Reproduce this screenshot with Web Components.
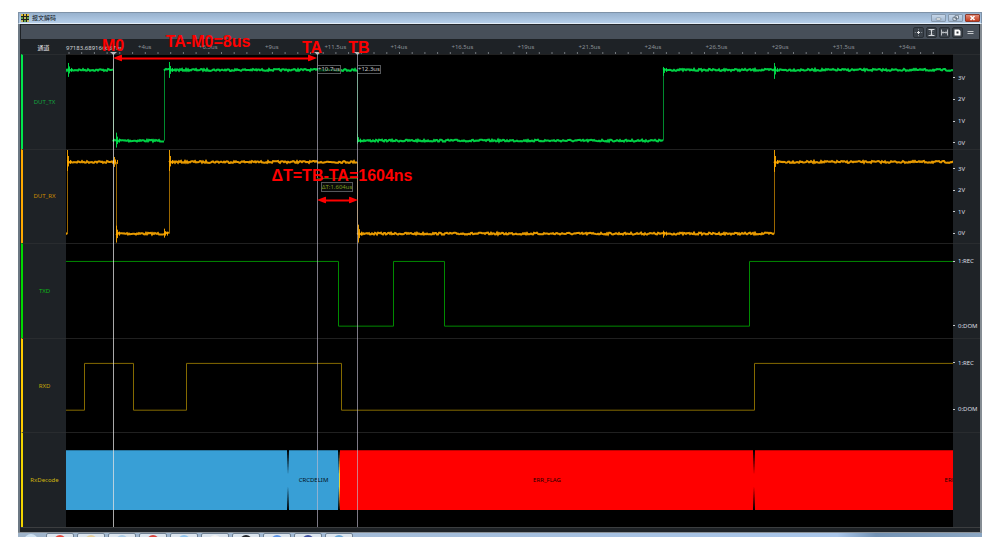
<!DOCTYPE html>
<html lang="zh-CN">
<head>
<meta charset="utf-8">
<title>报文解码</title>
<style>
  body {
    margin: 0;
    background: #fff;
    font: 6px/8px "Noto Sans", "Noto Sans CJK SC", sans-serif;
  }
</style>
</head>
<body>

<scope-window>
  <span slot="title">报文解码</span>
  <time-ruler slot="ruler" start="97183.689166667us" ticks="+4us +6.5us +9us +11.5us +14us +16.5us +19us +21.5us +24us +26.5us +29us +31.5us +34us">通道</time-ruler>

  <scope-channel name="DUT_TX" color="#00e64d" text="#12a33e">
    <analog-trace color="#00e64d" high="15" low="86" levels="0H 47L 98H 291L 597H" spikes="2:-7:7 50:-8:7 103:-8:8 291:-7:3 597:-3:6 708:-7:9"></analog-trace>
    <value-scale slot="scale" from="23" to="88" labels="3V 2V 1V 0V"></value-scale>
  </scope-channel>
  <scope-channel name="DUT_RX" color="#ffaa00" text="#c98c00">
    <analog-trace color="#ffaa00" high="12" low="84" levels="0L 1H 50L 103H 291L 708H" spikes="1:-12:9 48:-5:5 50:-8:9 98:-5:4 103:-12:9 292:-9:9 597:-3:4 708:-12:10"></analog-trace>
    <value-scale slot="scale" from="19" to="84" labels="3V 2V 1V 0V"></value-scale>
  </scope-channel>
  <scope-channel name="TXD" color="#00d900" text="#0cb516">
    <logic-trace color="#008a00" high="17" low="82" levels="0H 272L 327H 378L 683H"></logic-trace>
    <value-scale slot="scale" from="17" to="82" labels="1:REC 0:DOM"></value-scale>
  </scope-channel>
  <scope-channel name="RXD" color="#ffcc00" text="#c4a408">
    <logic-trace color="#846a00" high="24" low="71" levels="0L 18H 67L 120H 275L 688H"></logic-trace>
    <value-scale slot="scale" from="24" to="71" labels="1:REC 0:DOM"></value-scale>
  </scope-channel>
  <scope-channel name="RxDecode" color="#f2d500" text="#cdb40e">
    <decode-lane>
      <decode-frame span="222"></decode-frame>
      <decode-frame span="51">CRCDELIM</decode-frame>
      <decode-frame span="415" error first>ERR_FLAG</decode-frame>
      <decode-frame span="409" error>ERR_FLAG</decode-frame>
    </decode-lane>
  </scope-channel>

  <time-cursor slot="overlay" at="47" main></time-cursor>
  <time-cursor slot="overlay" at="251">+10.7us</time-cursor>
  <time-cursor slot="overlay" at="291">+12.3us</time-cursor>
  <delta-tag slot="overlay" from="251" to="291">ΔT:1.604us</delta-tag>

  <span-arrow slot="overlay" from="47" to="251" y="4"></span-arrow>
  <span-arrow slot="overlay" from="251" to="292" y="146"></span-arrow>
  <red-note slot="overlay" at="47" y="-8">M0</red-note>
  <red-note slot="overlay" at="142" y="-12">TA-M0=8us</red-note>
  <red-note slot="overlay" at="246" y="-6">TA</red-note>
  <red-note slot="overlay" at="293" y="-6">TB</red-note>
  <red-note slot="overlay" at="276" y="122">ΔT=TB-TA=1604ns</red-note>
</scope-window>

<script>
// size of the drawing grid of one lane, and of all lanes together
const LANE_W = 887;
const LANE_H = 94;
const PLOT_H = 473;

const pctX = (x) => (Number(x) / LANE_W) * 100 + "%";
const pctY = (y) => (Number(y) / PLOT_H) * 100 + "%";

// "0H 47L" -> [{ x: 0, y: high }, { x: 47, y: low }]
function readLevels(el) {
  return el.getAttribute("levels").split(" ").map((part) => ({
    x: parseInt(part, 10),
    y: Number(el.getAttribute(part.endsWith("H") ? "high" : "low")),
  }));
}

class ScopeWindow extends HTMLElement {
  constructor() {
    super();
    this.attachShadow({ mode: "open" });
    this.shadowRoot.innerHTML = `
      <style>
        :host {
          --gutter: 45px;
          --scale: 27px;
          display: flex;
          flex-direction: column;
          box-sizing: border-box;
          height: 100vh;
          padding: 12px 18px 11px;
        }
        header {
          display: flex;
          align-items: center;
          box-sizing: border-box;
          height: 12px;
          padding: 0 1px 0 2px;
          border: 1px solid #7f93a8;
          border-bottom: 1px solid #e4eef8;
          background: linear-gradient(#98b2ce, #b5cee9);
          color: #10161c;
        }
        header svg { width: 8px; height: 8px; margin-right: 3px; }
        .title { flex: 1; }
        header button {
          display: flex;
          justify-content: center;
          align-items: center;
          width: 15px;
          height: 8px;
          margin: 0 0 0 2px;
          padding: 0;
          border: 1px solid #8799ad;
          border-radius: 1px;
          background: linear-gradient(#c6d6e8, #a3b9d2);
        }
        header button svg { width: 9px; height: 6px; margin: 0; }
        header button.close {
          border-color: #8c3a2c;
          background: linear-gradient(#e08a76, #c33a1d);
        }
        main {
          flex: 1;
          display: flex;
          flex-direction: column;
          min-height: 0;
          padding-left: 1px;
          border-left: 2px solid #6c7883;
          border-right: 2px solid #868d94;
          background: #1e2226;
        }
        nav {
          display: flex;
          justify-content: flex-end;
          align-items: center;
          gap: 2px;
          box-sizing: border-box;
          height: 15px;
          margin-right: 1px;
          padding-right: 3px;
          border-top: 1px solid #25292e;
          background: #474f59;
        }
        nav button {
          box-sizing: border-box;
          width: 11px;
          height: 11px;
          padding: 0;
          border: 1px solid #2a3036;
          border-radius: 2px;
          background: #3a4149;
        }
        nav button.flat { border-color: #474f59; background: none; }
        nav svg { display: block; width: 9px; height: 9px; }
        .lanes {
          position: relative;
          flex: 1;
          display: flex;
          flex-direction: column;
          min-height: 0;
        }
        .overlay {
          position: absolute;
          top: 0;
          bottom: 0;
          left: var(--gutter);
          right: var(--scale);
        }
        .foot {
          height: 4px;
          border-top: 1px solid #3c3e40;
        }
        task-strip { flex: none; }
      </style>
      <header>
        <svg viewBox="0 0 8 8" aria-hidden="true">
          <rect width="8" height="8" fill="#20241c"/>
          <path d="M0 0h2v2H0zM3 0h2v2H3zM6 0h2v2H6z" fill="#e0bc38"/>
          <path d="M0 3h2v2H0zM6 3h2v2H6zM3 6h2v2H3z" fill="#5fa34a"/>
          <path d="M3 3h2v2H3zM0 6h2v2H0zM6 6h2v2H6z" fill="#c8b860"/>
        </svg>
        <span class="title"><slot name="title"></slot></span>
        <button aria-label="最小化"><svg viewBox="0 0 9 6"><rect x="2" y="3" width="5" height="2" rx="1" fill="#fff" stroke="#5c6b7a" stroke-width=".6"/></svg></button>
        <button aria-label="还原"><svg viewBox="0 0 9 6"><path d="M4 .7h3.500v3H4zM2 2.300h3.500v3H2z" fill="#e8eef5" stroke="#4f5d6b" stroke-width=".7"/></svg></button>
        <button class="close" aria-label="关闭"><svg viewBox="0 0 9 6"><path d="M2.500 1l4 4M6.500 1l-4 4" stroke="#fff" stroke-width="1.500"/></svg></button>
      </header>
      <main>
        <nav>
          <button aria-label="居中"><svg viewBox="0 0 9 9"><path d="M4.500 3v3M3 4.500h3" stroke="#e4e6e8"/><path d="M4.500 .8v1M4.500 7.200v1M.8 4.500h1M7.200 4.500h1" stroke="#8d949b"/></svg></button>
          <button aria-label="垂直适应"><svg viewBox="0 0 9 9"><path d="M1.500 1.500h6M1.500 7.500h6M4.500 2v5" stroke="#d5d8db"/><path d="M3 3.500l1.500-1.500L6 3.500M3 5.500L4.500 7 6 5.500" fill="none" stroke="#d5d8db" stroke-width=".6"/></svg></button>
          <button aria-label="水平适应"><svg viewBox="0 0 9 9"><path d="M1.500 1.500v6M7.500 1.500v6M2 4.500h5" stroke="#b9bdc2"/><path d="M3.500 3L2 4.500 3.500 6M5.500 3L7 4.500 5.500 6" fill="none" stroke="#b9bdc2" stroke-width=".6"/></svg></button>
          <button aria-label="截图"><svg viewBox="0 0 9 9"><path d="M1.500 1.500h4.500l1.500 1.500v4.500h-6z" fill="#fff"/><rect x="3.500" y="3.500" width="2" height="2" fill="#30363d"/></svg></button>
          <button class="flat" aria-label="菜单"><svg viewBox="0 0 9 9"><path d="M1.500 3.500h6M1.500 5.500h6" stroke="#c4c8cc"/></svg></button>
        </nav>
        <slot name="ruler"></slot>
        <div class="lanes">
          <slot></slot>
          <div class="overlay"><slot name="overlay"></slot></div>
        </div>
        <div class="foot"></div>
      </main>
      <task-strip></task-strip>
    `;
  }
}
customElements.define("scope-window", ScopeWindow);

class TimeRuler extends HTMLElement {
  constructor() {
    super();
    this.attachShadow({ mode: "open" });
  }
  connectedCallback() {
    const labels = this.getAttribute("ticks").split(" ");
    // five minor ticks for each label, 13 grid units apart
    let marks = "";
    for (let i = 0; i < 69; i++) {
      const x = 3 + i * 12.71;
      marks += `M${x.toFixed(1)} 0v2`;
    }
    this.shadowRoot.innerHTML = `
      <style>
        :host {
          display: flex;
          height: 15px;
          background: #1e2226;
          color: #8c9196;
        }
        .head { width: var(--gutter); margin-top: 5px; text-align: center; color: #f2f3f4; }
        .plot { flex: 1; display: flex; flex-direction: column; }
        .row { flex: 1; display: flex; padding-right: 14px; }
        .start { width: 47px; margin-top: 5px; white-space: nowrap; color: #d2d4d6; }
        .label { flex: 1; margin-top: 4px; text-align: center; }
        .scale { width: var(--scale); }
        svg { display: block; width: 100%; height: 2px; }
      </style>
      <div class="head"><slot></slot></div>
      <div class="plot">
        <div class="row">
          <div class="start">${this.getAttribute("start")}</div>
          ${labels.map((t) => `<div class="label">${t}</div>`).join("")}
        </div>
        <svg viewBox="0 0 ${LANE_W} 2" preserveAspectRatio="none"><path d="${marks}" stroke="#74797e"/></svg>
      </div>
      <div class="scale"></div>
    `;
  }
}
customElements.define("time-ruler", TimeRuler);

class ScopeChannel extends HTMLElement {
  constructor() {
    super();
    this.attachShadow({ mode: "open" });
  }
  connectedCallback() {
    this.shadowRoot.innerHTML = `
      <style>
        :host { flex: 1; display: flex; min-height: 0; }
        .name {
          display: flex;
          align-items: center;
          justify-content: center;
          box-sizing: border-box;
          width: var(--gutter);
          border-left: 2px solid ${this.getAttribute("color")};
          border-top: 1px solid #292c2f;
          color: ${this.getAttribute("text")};
        }
        .plot {
          flex: 1;
          display: flex;
          min-width: 0;
          overflow: hidden;
          border-top: 1px solid #202020;
          background: #000;
        }
        .scale { display: flex; width: var(--scale); border-top: 1px solid #292c2f; }
      </style>
      <div class="name">${this.getAttribute("name")}</div>
      <div class="plot"><slot></slot></div>
      <div class="scale"><slot name="scale"></slot></div>
    `;
  }
}
customElements.define("scope-channel", ScopeChannel);

class ValueScale extends HTMLElement {
  constructor() {
    super();
    this.attachShadow({ mode: "open" });
  }
  connectedCallback() {
    const from = Number(this.getAttribute("from"));
    const to = Number(this.getAttribute("to"));
    const labels = this.getAttribute("labels").split(" ");
    this.shadowRoot.innerHTML = `
      <style>
        :host { flex: 1; display: flex; flex-direction: column; color: #dcdee0; }
        .before { flex: ${from - 4} 0 0; }
        .after { flex: ${LANE_H - to - 4} 0 0; }
        .labels {
          flex: ${to - from + 8} 0 0;
          display: flex;
          flex-direction: column;
          justify-content: space-between;
        }
        .labels div { display: flex; align-items: center; gap: 3px; }
        .labels div::before { content: ""; width: 2px; height: 1px; background: #c9cccf; }
      </style>
      <div class="before"></div>
      <div class="labels">${labels.map((t) => `<div>${t}</div>`).join("")}</div>
      <div class="after"></div>
    `;
  }
}
customElements.define("value-scale", ValueScale);

const traceStyle = `
  <style>
    :host { flex: 1; display: flex; min-width: 0; }
    svg { flex: 1; width: 100%; height: 100%; }
    path { fill: none; vector-effect: non-scaling-stroke; }
  </style>
`;

class LogicTrace extends HTMLElement {
  constructor() {
    super();
    this.attachShadow({ mode: "open" });
  }
  connectedCallback() {
    const levels = readLevels(this);
    let d = `M0 ${levels[0].y + 0.5}`;
    levels.slice(1).forEach((p) => {
      d += `H${p.x + 0.5}V${p.y + 0.5}`;
    });
    d += `H${LANE_W}`;
    this.shadowRoot.innerHTML = `${traceStyle}
      <svg viewBox="0 0 ${LANE_W} ${LANE_H}" preserveAspectRatio="none">
        <path d="${d}" stroke="${this.getAttribute("color")}"/>
      </svg>
    `;
  }
}
customElements.define("logic-trace", LogicTrace);

class AnalogTrace extends HTMLElement {
  constructor() {
    super();
    this.attachShadow({ mode: "open" });
    this._seed = 7;
  }
  // small fixed generator, so the noise is the same on each load
  _noise() {
    this._seed = (this._seed * 16807) % 2147483647;
    return this._seed / 2147483647 - 0.5;
  }
  connectedCallback() {
    const color = this.getAttribute("color");
    const levels = readLevels(this);
    const levelAt = (x) => levels.filter((p) => p.x <= x).pop().y;
    let flat = "";
    let edges = "";
    levels.forEach((p, i) => {
      const end = i + 1 < levels.length ? levels[i + 1].x : LANE_W;
      for (let x = p.x; x <= end; x++) {
        flat += (x === p.x ? "M" : "L") + x + " " + (p.y + this._noise() * 2).toFixed(1);
      }
      if (i > 0) edges += `M${p.x + 0.5} ${levels[i - 1].y}V${p.y}`;
    });
    let spikes = "";
    this.getAttribute("spikes").split(" ").forEach((part) => {
      const [x, up, down] = part.split(":").map(Number);
      const y = levelAt(x);
      spikes += `M${x + 0.5} ${y + up}V${y + down}`;
      spikes += `M${x + 1.5} ${y + up / 2}V${y + down / 2}`;
      spikes += `M${x + 3.5} ${y - 2}V${y + 2}`;
    });
    this.shadowRoot.innerHTML = `${traceStyle}
      <svg viewBox="0 0 ${LANE_W} ${LANE_H}" preserveAspectRatio="none">
        <path d="${edges}" stroke="${color}" stroke-opacity=".6"/>
        <path d="${flat}" stroke="${color}" stroke-width="2" stroke-opacity=".9"/>
        <path d="${spikes}" stroke="${color}" stroke-opacity=".9"/>
      </svg>
    `;
  }
}
customElements.define("analog-trace", AnalogTrace);

class DecodeLane extends HTMLElement {
  constructor() {
    super();
    this.attachShadow({ mode: "open" });
    this.shadowRoot.innerHTML = `
      <style>
        :host { flex: 1; display: flex; flex-direction: column; min-width: 0; }
        .gap { flex: 17 0 0; }
        .frames { flex: 60 0 0; display: flex; }
      </style>
      <div class="gap"></div>
      <div class="frames"><slot></slot></div>
      <div class="gap"></div>
    `;
  }
}
customElements.define("decode-lane", DecodeLane);

class DecodeFrame extends HTMLElement {
  constructor() {
    super();
    this.attachShadow({ mode: "open" });
  }
  connectedCallback() {
    this.shadowRoot.innerHTML = `
      <style>
        :host {
          flex: none;
          display: flex;
          width: ${pctX(this.getAttribute("span"))};
        }
        .frame {
          flex: 1;
          display: flex;
          align-items: center;
          justify-content: center;
          background: #389fd6;
          color: #041018;
          clip-path: polygon(1px 0, calc(100% - 1px) 0, 100% 40%, 100% 60%, calc(100% - 1px) 100%, 1px 100%, 0 60%, 0 40%);
        }
        :host(:first-child) .frame {
          clip-path: polygon(0 0, calc(100% - 1px) 0, 100% 40%, 100% 60%, calc(100% - 1px) 100%, 0 100%);
        }
        :host([error]) .frame { background: #f00; color: #180000; }
        :host([first]) .frame { border-left: 1px solid #e8d23a; }
      </style>
      <div class="frame"><slot></slot></div>
    `;
  }
}
customElements.define("decode-frame", DecodeFrame);

class TimeCursor extends HTMLElement {
  constructor() {
    super();
    this.attachShadow({ mode: "open" });
  }
  connectedCallback() {
    const tag = this.textContent ? `<div class="tag"><slot></slot></div>` : "";
    this.shadowRoot.innerHTML = `
      <style>
        :host {
          position: absolute;
          top: 0;
          bottom: 0;
          left: ${pctX(this.getAttribute("at"))};
          border-left: 1px solid rgba(190, 186, 205, .65);
        }
        :host([main]) { border-color: rgba(225, 225, 225, .75); }
        .head { position: absolute; top: -2px; left: -4px; width: 7px; height: 3px; background: #b9bbbd; clip-path: polygon(0 0, 100% 0, 50% 100%); }
        .tag {
          margin-top: 11px;
          border: 1px solid #55585b;
          border-left: 0;
          background: rgba(0, 0, 0, .7);
          color: #c4c6c8;
          line-height: 7px;
        }
      </style>
      <div class="head"></div>
      ${tag}
    `;
  }
}
customElements.define("time-cursor", TimeCursor);

class DeltaTag extends HTMLElement {
  constructor() {
    super();
    this.attachShadow({ mode: "open" });
  }
  connectedCallback() {
    const from = Number(this.getAttribute("from"));
    const to = Number(this.getAttribute("to"));
    this.shadowRoot.innerHTML = `
      <style>
        :host {
          position: absolute;
          top: ${pctY(124)};
          left: ${pctX(from)};
          width: ${pctX(to - from)};
          display: flex;
          flex-direction: column;
          align-items: center;
          gap: 3px;
        }
        .line { width: 100%; height: 1px; background: #3c5210; }
        .tag { border: 1px solid #55585b; background: #0a0a0a; color: #7d9c1e; white-space: nowrap; }
      </style>
      <div class="line"></div>
      <div class="tag"><slot></slot></div>
    `;
  }
}
customElements.define("delta-tag", DeltaTag);

class SpanArrow extends HTMLElement {
  constructor() {
    super();
    this.attachShadow({ mode: "open" });
  }
  connectedCallback() {
    const from = Number(this.getAttribute("from"));
    const to = Number(this.getAttribute("to"));
    this.shadowRoot.innerHTML = `
      <style>
        :host {
          position: absolute;
          top: ${pctY(this.getAttribute("y"))};
          left: ${pctX(from)};
          width: ${pctX(to - from)};
          display: flex;
          align-items: center;
          transform: translateY(-50%);
        }
        .line { flex: 1; height: 2px; background: #f00; }
        svg { width: 9px; height: 7px; }
      </style>
      <svg viewBox="0 0 9 7"><path d="M0 3.500L9 0v7z" fill="#f00"/></svg>
      <div class="line"></div>
      <svg viewBox="0 0 9 7"><path d="M9 3.500L0 0v7z" fill="#f00"/></svg>
    `;
  }
}
customElements.define("span-arrow", SpanArrow);

class RedNote extends HTMLElement {
  constructor() {
    super();
    this.attachShadow({ mode: "open" });
  }
  connectedCallback() {
    this.shadowRoot.innerHTML = `
      <style>
        :host {
          position: absolute;
          top: ${pctY(this.getAttribute("y"))};
          left: ${pctX(this.getAttribute("at"))};
          transform: translate(-50%, -50%);
          color: #f00;
          font: bold 16px/18px "Liberation Sans", Arial, sans-serif;
          white-space: nowrap;
        }
      </style>
      <slot></slot>
    `;
  }
}
customElements.define("red-note", RedNote);

class TaskStrip extends HTMLElement {
  constructor() {
    super();
    this.attachShadow({ mode: "open" });
    // each button shows only the top of its icon
    const icons = ["#e8483a", "#e6cf9a", "#a9cbe6", "#d8433c", "#8fc4ee", "#f4f4f4", "#23262b", "#5b93e6", "#3d4fa0", "#6aa7d8"];
    this.shadowRoot.innerHTML = `
      <style>
        :host {
          display: flex;
          gap: 3px;
          box-sizing: border-box;
          height: 5px;
          overflow: hidden;
          border-top: 1px solid #8b9197;
          background: linear-gradient(90deg, #9fb4ca, #a9c6ea 85%, #7292b4 89%, #8ba6c2);
        }
        .orb { width: 14px; height: 14px; margin: 1px 5px 0 6px; border-radius: 50%; background: #cfe2f2; }
        .item {
          display: flex;
          justify-content: center;
          box-sizing: border-box;
          width: 28px;
          height: 12px;
          border: 1px solid #6f8093;
          border-radius: 2px;
          background: #dde6ef;
        }
        .item i { width: 12px; height: 12px; margin-top: 1px; border-radius: 6px; }
      </style>
      <div class="orb"></div>
      ${icons.map((c) => `<div class="item"><i style="background:${c}"></i></div>`).join("")}
    `;
  }
}
customElements.define("task-strip", TaskStrip);
</script>
</body>
</html>
